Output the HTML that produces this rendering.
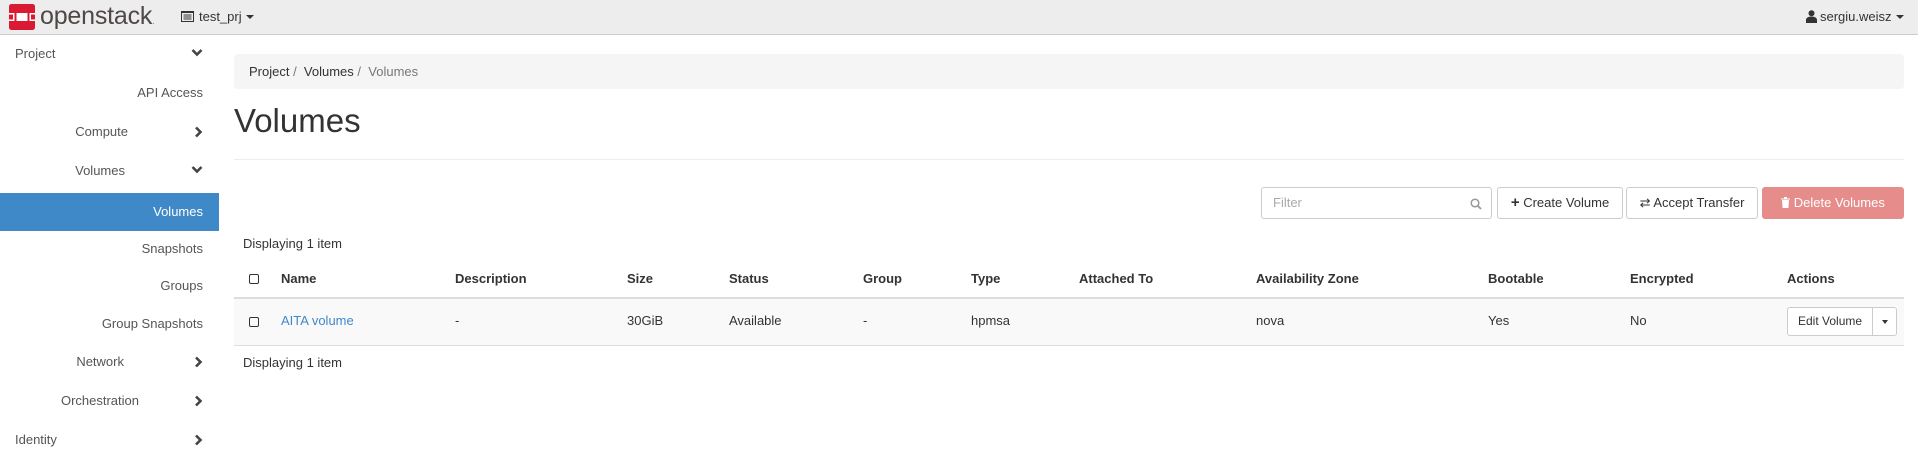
<!DOCTYPE html>
<html><head><meta charset="utf-8"><style>
*{box-sizing:border-box;margin:0;padding:0}
body{width:1918px;height:455px;overflow:hidden;background:#fff;font-family:"Liberation Sans",Arial,sans-serif;font-size:13px;color:#333;position:relative}
.abs{position:absolute;white-space:nowrap}
.top{position:absolute;left:0;top:0;width:1918px;height:35px;background:#ededed;border-bottom:1px solid #ccc}
.si{position:absolute;left:0;width:219px;height:38px;line-height:38px;color:#555}
.si .t{position:absolute;right:16px}
.chev{position:absolute;left:191px;top:13px}
.act{background:#3f89c9;color:#fff}
.bc{position:absolute;left:234px;top:54px;width:1670px;height:35px;background:#f5f5f5;border-radius:4px;line-height:35px;padding-left:15px;color:#333}
.btn{position:absolute;top:187px;height:32px;border:1px solid #ccc;border-radius:3px;background:#fff;line-height:30px;text-align:center;color:#333}
.cb{position:absolute;width:10px;height:10px;border:1.5px solid #333;border-radius:2px}
</style></head><body>
<div class="top"></div>
<svg class="abs" style="left:9px;top:4px" width="26" height="26" viewBox="0 0 26 26"><rect width="26" height="26" rx="2.5" fill="#da1a32"/><rect x="0" y="9" width="26" height="8" fill="#fff"/><rect x="0" y="10.5" width="4" height="5" fill="#da1a32"/><rect x="22" y="10.5" width="4" height="5" fill="#da1a32"/><rect x="6.5" y="6.5" width="13" height="13" fill="none" stroke="#da1a32" stroke-width="2"/></svg>
<div class="abs" style="left:40px;top:2px;font-size:25px;color:#4e4846;letter-spacing:-0.2px">openstack<span style="font-size:9px;color:#888">.</span></div>
<svg class="abs" style="left:181px;top:11px" width="13" height="11" viewBox="0 0 13 11"><rect x="0.5" y="0.5" width="12" height="10" fill="none" stroke="#333"/><rect x="0" y="0" width="13" height="2" fill="#333"/><path d="M2.5 4h8M2.5 6h8M2.5 8h8" stroke="#333"/></svg>
<div class="abs" style="left:199px;top:9px;font-size:13px">test_prj</div>
<div class="abs" style="left:246px;top:15px;width:0;height:0;border-left:4px solid transparent;border-right:4px solid transparent;border-top:4px solid #333"></div>
<svg class="abs" style="left:1806px;top:10px" width="11" height="13" viewBox="0 0 11 13"><circle cx="5.5" cy="3.3" r="3" fill="#333"/><path d="M0 13v-3c0-2 2-3.5 5.5-3.5S11 8 11 10v3z" fill="#333"/></svg>
<div class="abs" style="left:1820px;top:9px">sergiu.weisz</div>
<div class="abs" style="left:1896px;top:15px;width:0;height:0;border-left:4px solid transparent;border-right:4px solid transparent;border-top:4px solid #333"></div>

<div class="si" style="top:35px"><span style="position:absolute;left:15px">Project</span><svg class="chev" width="12" height="9" viewBox="0 0 12 9"><path d="M1.5 2l4.5 4.5L10.5 2" stroke="#444" stroke-width="2.6" fill="none"/></svg></div>
<div class="si" style="top:74px"><span class="t">API Access</span></div>
<div class="si" style="top:113px"><span class="t" style="right:91px">Compute</span><svg class="chev" style="left:194px" width="9" height="12" viewBox="0 0 9 12"><path d="M2 1.5l4.5 4.5L2 10.5" stroke="#444" stroke-width="2.6" fill="none"/></svg></div>
<div class="si" style="top:152px"><span class="t" style="right:94px">Volumes</span><svg class="chev" width="12" height="9" viewBox="0 0 12 9"><path d="M1.5 2l4.5 4.5L10.5 2" stroke="#444" stroke-width="2.6" fill="none"/></svg></div>
<div class="si act" style="top:193px"><span class="t">Volumes</span></div>
<div class="si" style="top:230px"><span class="t">Snapshots</span></div>
<div class="si" style="top:267px"><span class="t">Groups</span></div>
<div class="si" style="top:305px"><span class="t">Group Snapshots</span></div>
<div class="si" style="top:343px"><span class="t" style="right:95px">Network</span><svg class="chev" style="left:194px" width="9" height="12" viewBox="0 0 9 12"><path d="M2 1.5l4.5 4.5L2 10.5" stroke="#444" stroke-width="2.6" fill="none"/></svg></div>
<div class="si" style="top:382px"><span class="t" style="right:80px">Orchestration</span><svg class="chev" style="left:194px" width="9" height="12" viewBox="0 0 9 12"><path d="M2 1.5l4.5 4.5L2 10.5" stroke="#444" stroke-width="2.6" fill="none"/></svg></div>
<div class="si" style="top:421px"><span style="position:absolute;left:15px">Identity</span><svg class="chev" style="left:194px" width="9" height="12" viewBox="0 0 9 12"><path d="M2 1.5l4.5 4.5L2 10.5" stroke="#444" stroke-width="2.6" fill="none"/></svg></div>

<div class="bc">Project <span style="color:#777">/</span>&nbsp; Volumes <span style="color:#777">/</span>&nbsp; <span style="color:#777">Volumes</span></div>
<div class="abs" style="left:234px;top:102px;font-size:33px;font-weight:400;color:#333">Volumes</div>
<div class="abs" style="left:234px;top:159px;width:1670px;height:1px;background:#eee"></div>

<div class="abs" style="left:1261px;top:187px;width:231px;height:32px;border:1px solid #ccc;border-radius:3px"></div>
<div class="abs" style="left:1273px;top:195px;color:#aaa">Filter</div>
<svg class="abs" style="left:1470px;top:198px" width="12" height="12" viewBox="0 0 12 12"><circle cx="5" cy="5" r="3.8" stroke="#999" stroke-width="1.5" fill="none"/><path d="M7.8 7.8L11 11" stroke="#999" stroke-width="1.8"/></svg>
<div class="btn" style="left:1497px;width:126px"><b style="font-size:15px">+</b> Create Volume</div>
<div class="btn" style="left:1626px;width:132px">⇄ Accept Transfer</div>
<div class="btn" style="left:1762px;width:142px;background:#e68d8b;border-color:#e68d8b;color:#fff"><svg width="9" height="11" viewBox="0 0 9 11" style="vertical-align:-1px"><path d="M0 1.5h9v1H0zM3 0h3v1.5H3zM1 3h7l-.6 8H1.6z" fill="#fff"/></svg> Delete Volumes</div>

<div class="abs" style="left:243px;top:236px">Displaying 1 item</div>
<div class="abs" style="left:234px;top:297px;width:1670px;height:2px;background:#ddd"></div>
<div class="abs" style="left:234px;top:299px;width:1670px;height:47px;background:#f9f9f9;border-bottom:1px solid #ddd"></div>
<div class="cb" style="left:249px;top:274px"></div>
<div class="cb" style="left:249px;top:317px"></div>
<div class="abs" style="top:271px;left:281px;font-weight:bold">Name</div>
<div class="abs" style="top:271px;left:455px;font-weight:bold">Description</div>
<div class="abs" style="top:271px;left:627px;font-weight:bold">Size</div>
<div class="abs" style="top:271px;left:729px;font-weight:bold">Status</div>
<div class="abs" style="top:271px;left:863px;font-weight:bold">Group</div>
<div class="abs" style="top:271px;left:971px;font-weight:bold">Type</div>
<div class="abs" style="top:271px;left:1079px;font-weight:bold">Attached To</div>
<div class="abs" style="top:271px;left:1256px;font-weight:bold">Availability Zone</div>
<div class="abs" style="top:271px;left:1488px;font-weight:bold">Bootable</div>
<div class="abs" style="top:271px;left:1630px;font-weight:bold">Encrypted</div>
<div class="abs" style="top:271px;left:1787px;font-weight:bold">Actions</div>

<div class="abs" style="top:313px;left:281px;color:#3f89c9">AITA volume</div>
<div class="abs" style="top:313px;left:455px">-</div>
<div class="abs" style="top:313px;left:627px">30GiB</div>
<div class="abs" style="top:313px;left:729px">Available</div>
<div class="abs" style="top:313px;left:863px">-</div>
<div class="abs" style="top:313px;left:971px">hpmsa</div>
<div class="abs" style="top:313px;left:1256px">nova</div>
<div class="abs" style="top:313px;left:1488px">Yes</div>
<div class="abs" style="top:313px;left:1630px">No</div>
<div class="abs" style="left:1787px;top:307px;width:110px;height:29px;border:1px solid #ccc;border-radius:3px;background:#fff;font-size:12px;line-height:27px"><span style="position:absolute;left:10px">Edit Volume</span><span style="position:absolute;left:84px;top:0;width:1px;height:27px;background:#ccc"></span><span style="position:absolute;left:94px;top:12px;width:0;height:0;border-left:3.5px solid transparent;border-right:3.5px solid transparent;border-top:4px solid #333"></span></div>
<div class="abs" style="left:243px;top:355px">Displaying 1 item</div>
</body></html>
